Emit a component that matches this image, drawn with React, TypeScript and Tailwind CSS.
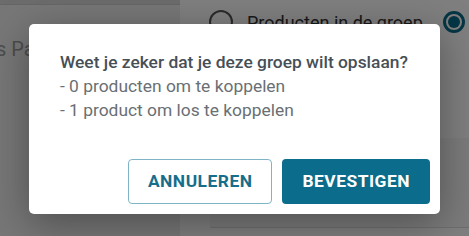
export default function App() {
  return (
    <div className="relative w-[469px] h-[236px] overflow-hidden bg-white font-['Roboto',sans-serif]">
      {/* Page behind the modal */}
      <div className="flex h-full">
        <div className="w-[180px] flex flex-col bg-[#eeeeee]">
          <div className="h-[5px] bg-[#d8d8d8] border-b border-[#cccccc]" />
          <div className="pt-[29px] -ml-[33px] text-[20px] text-[#9a9a9a] whitespace-nowrap">Prijs Pagina</div>
        </div>
        <div className="flex-1 flex flex-col bg-white">
          <div className="flex items-center h-[44px] pl-[29px]">
            <span className="w-[24px] h-[24px] rounded-full border-2 border-[#555]" />
            <span className="ml-[14px] text-[18px] text-[#333] whitespace-nowrap">Producten in de groep</span>
            <span className="ml-[20px] w-[22px] h-[22px] rounded-full border-[3px] border-[#0b6d8b] flex items-center justify-center">
              <span className="w-[12px] h-[12px] rounded-full bg-[#0b6d8b]" />
            </span>
          </div>
          <div className="mt-[94px] h-[90px] bg-[#f7f7f7] border-b border-[#dddddd] ml-[30px]" />
        </div>
      </div>

      {/* Overlay + dialog */}
      <div className="absolute inset-0 bg-black/50 flex justify-center pt-[24px]">
        <div className="w-[411px] h-[190px] bg-white rounded-[5px] shadow-[0_10px_40px_rgba(0,0,0,0.35)] flex flex-col">
          <div className="pt-[26px] pl-[31px] text-[17.4px] leading-[24px]">
            <p className="font-medium text-[#474f56]">Weet je zeker dat je deze groep wilt opslaan?</p>
            <p className="text-[#6a6f74]">- 0 producten om te koppelen</p>
            <p className="text-[#6a6f74]">- 1 product om los te koppelen</p>
          </div>
          <div className="mt-auto flex justify-end gap-[10px] p-[10px]">
            <button className="h-[45px] px-[19px] rounded-[4px] border border-[#7fb4c7] text-[#166e8b] text-[17.4px] font-bold tracking-[0.5px]">
              ANNULEREN
            </button>
            <button className="h-[45px] px-5 rounded-[4px] bg-[#0b6d8b] text-white text-[17.4px] font-bold tracking-[0.5px]">
              BEVESTIGEN
            </button>
          </div>
        </div>
      </div>
    </div>
  )
}
